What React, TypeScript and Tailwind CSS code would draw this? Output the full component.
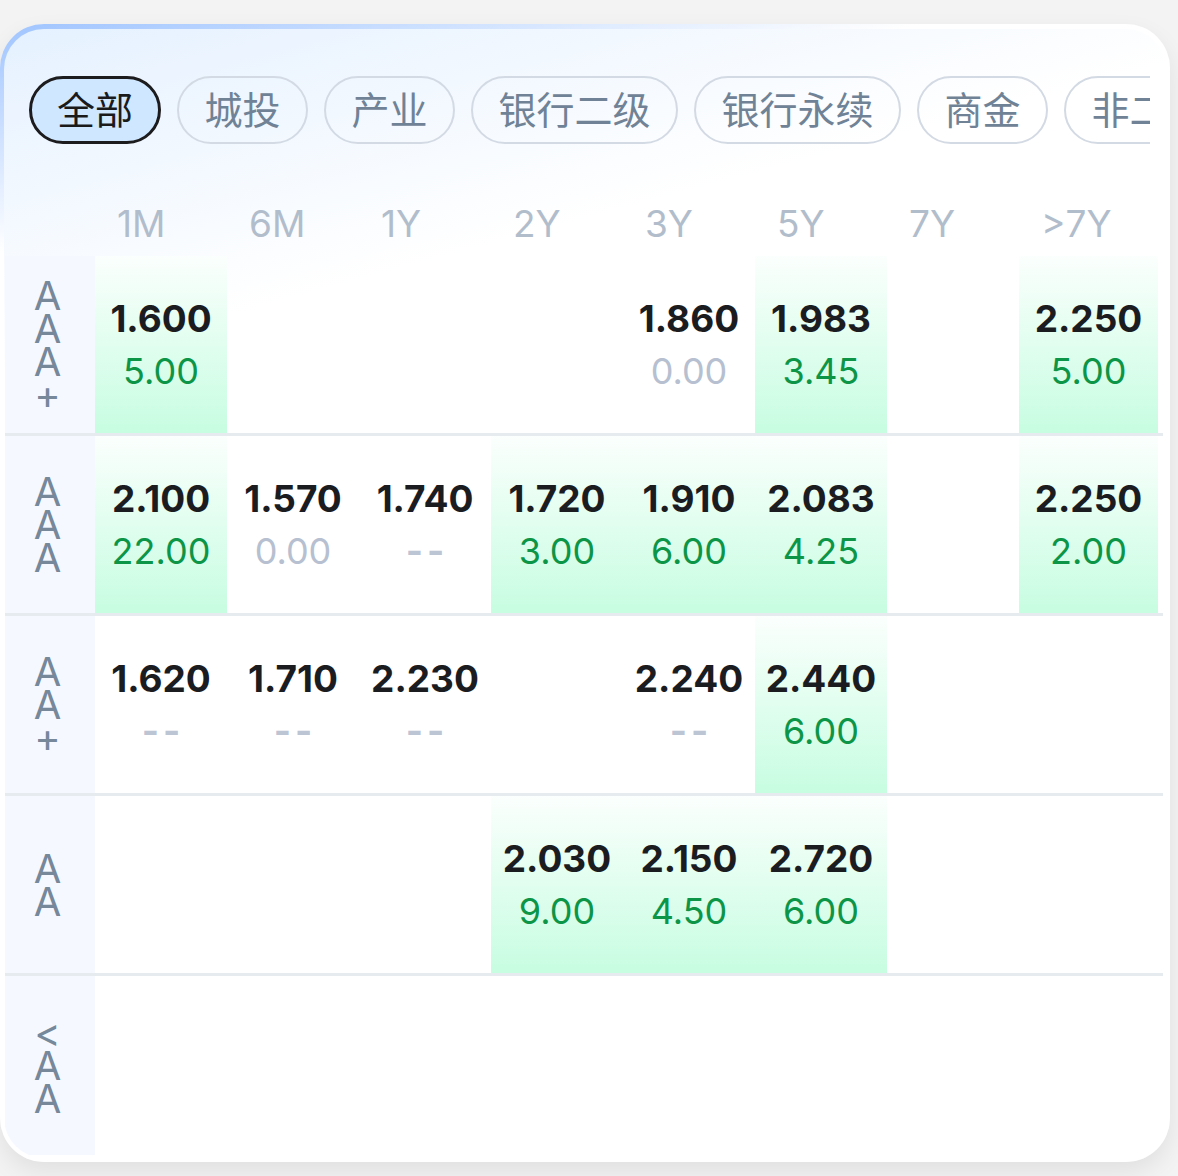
import React from "react";

type Cell = { price: string; vol: string; tone?: "green" | "gray"; hl?: boolean } | null;

interface RatingRow {
  label: string[];
  cells: Cell[];
}

const tabs = ["全部", "城投", "产业", "银行二级", "银行永续", "商金", "非二永"];
const terms = ["1M", "6M", "1Y", "2Y", "3Y", "5Y", "7Y", ">7Y"];

const rows: RatingRow[] = [
  {
    label: ["A", "A", "A", "+"],
    cells: [
      { price: "1.600", vol: "5.00", tone: "green", hl: true },
      null,
      null,
      null,
      { price: "1.860", vol: "0.00", tone: "gray" },
      { price: "1.983", vol: "3.45", tone: "green", hl: true },
      null,
      { price: "2.250", vol: "5.00", tone: "green", hl: true },
    ],
  },
  {
    label: ["A", "A", "A"],
    cells: [
      { price: "2.100", vol: "22.00", tone: "green", hl: true },
      { price: "1.570", vol: "0.00", tone: "gray" },
      { price: "1.740", vol: "--", tone: "gray" },
      { price: "1.720", vol: "3.00", tone: "green", hl: true },
      { price: "1.910", vol: "6.00", tone: "green", hl: true },
      { price: "2.083", vol: "4.25", tone: "green", hl: true },
      null,
      { price: "2.250", vol: "2.00", tone: "green", hl: true },
    ],
  },
  {
    label: ["A", "A", "+"],
    cells: [
      { price: "1.620", vol: "--", tone: "gray" },
      { price: "1.710", vol: "--", tone: "gray" },
      { price: "2.230", vol: "--", tone: "gray" },
      null,
      { price: "2.240", vol: "--", tone: "gray" },
      { price: "2.440", vol: "6.00", tone: "green", hl: true },
      null,
      null,
    ],
  },
  {
    label: ["A", "A"],
    cells: [
      null,
      null,
      null,
      { price: "2.030", vol: "9.00", tone: "green", hl: true },
      { price: "2.150", vol: "4.50", tone: "green", hl: true },
      { price: "2.720", vol: "6.00", tone: "green", hl: true },
      null,
      null,
    ],
  },
  {
    label: ["<", "A", "A"],
    cells: [null, null, null, null, null, null, null, null],
  },
];

const gridCols = "grid grid-cols-[90px_repeat(7,132px)_139px]";

const ValueCell = ({ cell }: { cell: Cell }) => {
  if (!cell) return <div />;
  return (
    <div
      className={`flex flex-col items-center justify-center ${
        cell.hl ? "bg-[linear-gradient(180deg,#fbfffd_0%,#c7fde1_100%)]" : ""
      }`}
    >
      <span className="text-[37px] leading-[52px] font-bold text-[#1b1c1f]">{cell.price}</span>
      {cell.vol === "--" ? (
        <span className="text-[37px] leading-[52px] font-bold text-[#bcc5d3] tracking-[4px] pl-[4px]">--</span>
      ) : (
        <span
          className={`text-[36px] leading-[52px] ${
            cell.tone === "green" ? "text-[#0c9547]" : "text-[#b6c0d0]"
          }`}
        >
          {cell.vol}
        </span>
      )}
    </div>
  );
};

export default function App() {
  return (
    <div className="min-h-screen bg-[#f3f3f3] pt-[24px] font-['Inter','Noto_Sans_CJK_SC',sans-serif]">
      <div className="w-[1170px] h-[1138px] rounded-[44px] p-[4px] pt-[5px] bg-[linear-gradient(166deg,#9fc4ff_0%,#ffffff_16%)] shadow-[0_10px_24px_rgba(0,0,0,0.08)]">
        <div className="h-full rounded-[40px] overflow-hidden bg-[linear-gradient(165deg,#e5f1ff_0%,#ffffff_24%)] pl-[1px]">
          {/* tabs */}
          <div className="pt-[47px] pl-[24px] w-[1145px] overflow-hidden">
            <div className="flex gap-[16px]">
              {tabs.map((t, i) => (
                <div
                  key={t}
                  className={`shrink-0 h-[68px] flex items-center rounded-full text-[38px] leading-none ${
                    i === 0
                      ? "border-[3px] border-[#1c1c1e] bg-[#cfe7ff] text-[#1a1a1a] px-[25px]"
                      : "border-2 border-[#d3dae3] text-[#708396] px-[25.5px]"
                  }`}
                >
                  {t}
                </div>
              ))}
            </div>
          </div>

          {/* term header */}
          <div className={`${gridCols} pt-[48px] h-[112px]`}>
            <div />
            {terms.map((t) => (
              <div key={t} className="h-[64px] flex items-center pl-[22px] text-[37px] text-[#b2bdcc]">
                {t}
              </div>
            ))}
          </div>

          {/* rating rows */}
          <div className="w-[1158px]">
            {rows.map((r, ri) => (
              <div
                key={ri}
                className={`${gridCols} ${
                  ri < rows.length - 1 ? "h-[180px] border-b-[3px] border-[#e6ebf0]" : "h-[179px]"
                }`}
              >
                <div className="bg-[#f5f9ff] flex flex-col items-center justify-center text-[40px] leading-[33px] text-[#76889a] pr-[5px]">
                  {r.label.map((l, li) => (
                    <span key={li}>{l}</span>
                  ))}
                </div>
                {r.cells.map((c, ci) => (
                  <ValueCell key={ci} cell={c} />
                ))}
              </div>
            ))}
          </div>
        </div>
      </div>
    </div>
  );
}
